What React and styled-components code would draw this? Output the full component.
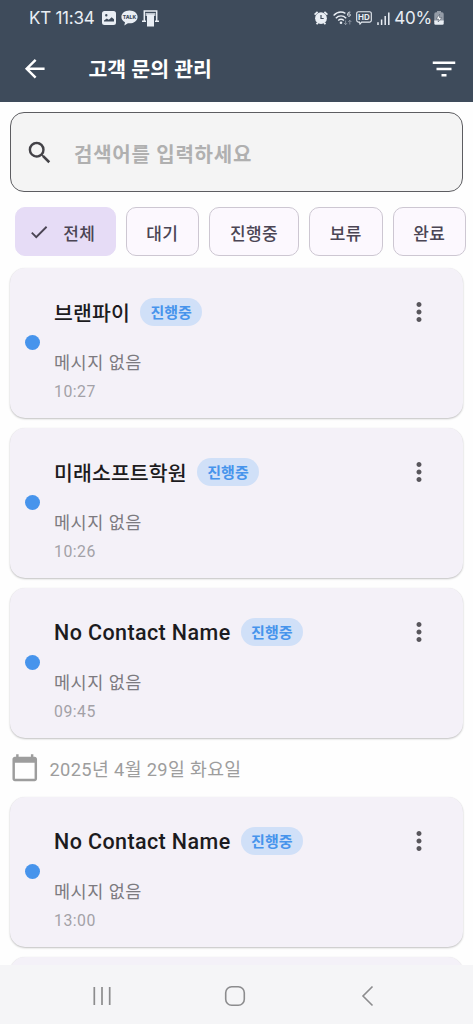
import React from "react";
import styled, { createGlobalStyle } from "styled-components";
import {
  MdArrowBack,
  MdFilterList,
  MdSearch,
  MdCheck,
  MdMoreVert,
  MdCalendarToday,
} from "react-icons/md";

const GlobalStyle = createGlobalStyle`
  * { box-sizing: border-box; }
  html, body { margin: 0; padding: 0; background: #fefefe; }
  body { font-family: Roboto, "Noto Sans CJK KR", sans-serif; overflow: hidden; }
  svg { display: block; flex: none; }
`;

const Screen = styled.div`
  width: 473px;
  height: 1024px;
  display: flex;
  flex-direction: column;
  overflow: hidden;
  background: #fefefe;
`;

const Header = styled.header`
  flex: none;
  height: 102px;
  background: #3e4b5b;
  color: #fff;
`;

const StatusBar = styled.div`
  height: 36px;
  padding: 0 29px 0 29px;
  display: flex;
  align-items: center;
  justify-content: space-between;
  color: #e9eef4;
`;

const StatusGroup = styled.div`
  display: flex;
  align-items: center;
  gap: ${(p) => p.$gap}px;
`;

const StatusText = styled.span`
  font-family: Inter, sans-serif;
  font-size: 17px;
  line-height: 20px;
  letter-spacing: ${(p) => p.$spacing}px;
  white-space: nowrap;
`;

const TitleBar = styled.div`
  height: 66px;
  padding: 0 14.5px 0 20px;
  display: flex;
  align-items: center;
`;

const Title = styled.h1`
  margin: 0 0 0 39px;
  padding-top: 2px;
  flex: 1;
  font-size: 20.5px;
  line-height: 28px;
  font-weight: 700;
`;

const SearchBox = styled.div`
  flex: none;
  margin: 10px 10px 0;
  height: 80px;
  padding: 1px 14px 0 13.5px;
  display: flex;
  align-items: center;
  border: 1px solid #5d5d61;
  border-radius: 14px;
  background: #f4f4f4;
  color: #434247;
`;

const Placeholder = styled.span`
  margin-left: 20px;
  padding-top: 5px;
  font-size: 20px;
  line-height: 28px;
  font-weight: 700;
  letter-spacing: 0.75px;
  color: #b0b0b0;
`;

const Chips = styled.div`
  flex: none;
  display: flex;
  gap: 10px;
  padding: 15px 7px 0 15px;
`;

const Chip = styled.div`
  width: ${(p) => p.$width}px;
  height: 49px;
  padding-right: ${(p) => (p.$selected ? 7 : 0)}px;
  display: flex;
  align-items: center;
  justify-content: center;
  gap: 13px;
  flex: none;
  border: 1px solid ${(p) => (p.$selected ? "#e6dcf6" : "#cdc7d2")};
  border-radius: 10px;
  background: ${(p) => (p.$selected ? "#e6dcf6" : "#fcf8fe")};
  color: #4b4554;
`;

const ChipLabel = styled.span`
  padding-top: 4px;
  font-size: 17px;
  line-height: 24px;
  font-weight: 500;
  letter-spacing: 0.3px;
`;

const List = styled.main`
  flex: 1;
  min-height: 0;
  overflow: hidden;
  padding: 12px 10px 0;
`;

const Card = styled.article`
  height: 150px;
  margin-bottom: 10px;
  padding: 0 29px 0 14.5px;
  display: flex;
  border-radius: 15px;
  background: #f4f1f8;
  box-shadow: 0 1px 2px rgba(0, 0, 0, 0.24), 0 0 1px rgba(0, 0, 0, 0.06);
`;

const Dot = styled.span`
  flex: none;
  width: 15px;
  height: 15px;
  margin-top: 67px;
  border-radius: 50%;
  background: #4794ec;
`;

const Body = styled.div`
  flex: 1;
  margin-left: 14.5px;
  padding-top: 30px;
`;

const NameRow = styled.div`
  display: flex;
  align-items: center;
  height: 28px;
  gap: 10px;
`;

const Name = styled.span`
  padding-top: ${(p) => (p.$latin ? 2 : 4)}px;
  font-size: ${(p) => (p.$latin ? 21.5 : 20.5)}px;
  line-height: 28px;
  font-weight: 500;
  letter-spacing: ${(p) => (p.$latin ? 0.4 : 0.1)}px;
  color: #1c1b20;
  white-space: nowrap;
`;

const Badge = styled.span`
  width: 62.5px;
  height: 28px;
  padding-top: 1px;
  border-radius: 14px;
  background: #d0e0f8;
  color: #4794ec;
  font-size: 15px;
  line-height: 28px;
  font-weight: 700;
  text-align: center;
`;

const Message = styled.div`
  margin-top: 25px;
  font-size: 17.5px;
  line-height: 24px;
  letter-spacing: 0.5px;
  color: #7c7a80;
`;

const Time = styled.div`
  margin-top: 7px;
  font-size: 15.8px;
  line-height: 20px;
  letter-spacing: 0.5px;
  color: #a3a1a7;
`;

const MoreButton = styled.span`
  margin-top: 29px;
  color: #58565c;
`;

const DateRow = styled.div`
  height: 49px;
  display: flex;
  align-items: center;
  gap: 10px;
  padding-bottom: 10px;
  color: #9d9d9d;
`;

const DateText = styled.span`
  padding-top: 4px;
  font-size: 18.3px;
  line-height: 26px;
  letter-spacing: 0.35px;
`;

const NavBar = styled.nav`
  flex: none;
  height: 59px;
  padding: 3px 4px 0 0;
  display: flex;
  justify-content: center;
  align-items: center;
  gap: 110.5px;
  background: #f5f5f7;
  color: #8c8c8e;
`;

const PictureIcon = () => (
  <svg width="14" height="14" viewBox="0 0 14 14">
    <path
      fill="currentColor"
      fillRule="evenodd"
      d="M2.5 0h9A2.5 2.5 0 0 1 14 2.5v9a2.5 2.5 0 0 1-2.500 2.500h-9A2.500 2.500 0 0 1 0 11.500v-9A2.500 2.500 0 0 1 2.500 0zM2 10.500h10V8.200L9.700 6.300 6.800 8.800 4.800 7.600 2 9.600zM4.300 3a1.200 1.200 0 1 0 0 2.400 1.200 1.200 0 0 0 0-2.400z"
    />
  </svg>
);

const TalkIcon = () => (
  <svg width="17" height="16" viewBox="0 0 17 16">
    <path
      fill="currentColor"
      d="M8.500 0.500C3.900 0.500.4 3.300.4 6.900c0 2.300 1.400 4.200 3.600 5.300L3.300 15.500l3.600-2.300c.5.100 1 .1 1.600.1 4.600 0 8.100-2.800 8.100-6.400S13.100.5 8.500.5z"
    />
    <text
      x="8.500"
      y="8.900"
      textAnchor="middle"
      fill="#3e4b5b"
      fontFamily="Inter, sans-serif"
      fontSize="5"
      fontWeight="800"
    >
      TALK
    </text>
  </svg>
);

const GateIcon = () => (
  <svg width="17" height="17" viewBox="0 0 17 17">
    <path d="M2.300 11V1h12.400v10M0 11.300h4M13 11.300h4" fill="none" stroke="currentColor" strokeWidth="1.500" />
    <path d="M3.600 3h9.800v3H3.600z" fill="currentColor" opacity="0.75" />
    <path d="M5 4.500h7V16.500H5z" fill="currentColor" />
  </svg>
);

const AlarmIcon = () => (
  <svg width="14" height="14" viewBox="0 0 14 14">
    <path d="M.6 3.600 3.600.9M13.400 3.600 10.400.9M2.600 13.300l1.200-1.600M11.400 13.300l-1.200-1.600" stroke="currentColor" strokeWidth="1.800" />
    <circle cx="7" cy="7.200" r="5.900" fill="currentColor" />
    <path d="M7 4v3.500h2.700" fill="none" stroke="#3e4b5b" strokeWidth="1.200" />
  </svg>
);

const WifiIcon = () => (
  <svg width="19" height="15" viewBox="0 0 19 15">
    <g fill="none" stroke="currentColor" strokeWidth="1.400">
      <path d="M.6 4.600C4.300.8 9 .5 12.400 2.400" />
      <path d="M2.800 7.200c3.100-3 7.300-3 10.400 0" />
      <path d="M5.200 9.600c1.700-1.500 4-1.500 5.700 0" />
    </g>
    <circle cx="8" cy="11.800" r="1.300" fill="currentColor" />
    <path d="M17.300 1.200c-2-.5-2.700.7-2.700 2.300 0 1.200.5 1.800 1.400 1.800s1.400-.6 1.400-1.300-.5-1.200-1.300-1.200-1.500.5-1.500 1.200" fill="none" stroke="currentColor" strokeWidth="0.900" />
    <path d="M12.600 9.500v4M11 12l1.600 1.700 1.600-1.700M16.800 13.500v-4M15.200 11l1.600-1.700 1.600 1.700" fill="none" stroke="currentColor" strokeWidth="0.900" opacity="0.45" />
  </svg>
);

const HdIcon = () => (
  <svg width="16" height="14" viewBox="0 0 16 14">
    <path d="M2.500.7h11A1.800 1.800 0 0 1 15.300 2.500v6.800a1.800 1.800 0 0 1-1.800 1.800H5.600L4 13.100 3.500 11.100h-1A1.800 1.800 0 0 1 .7 9.300V2.500A1.800 1.800 0 0 1 2.500.7z" fill="none" stroke="currentColor" strokeWidth="1.100" />
    <text x="8" y="8.900" textAnchor="middle" fill="currentColor" fontFamily="Inter, sans-serif" fontSize="8" fontWeight="700">
      HD
    </text>
  </svg>
);

const SignalIcon = () => (
  <svg width="13" height="13" viewBox="0 0 13 13">
    <path d="M1 10.300V13M4.600 7.500V13M8.200 4V13M11.800.5V13" stroke="currentColor" strokeWidth="1.500" />
  </svg>
);

const BatteryIcon = () => (
  <svg width="10" height="14" viewBox="0 0 10 14">
    <path d="M3 0h4v1.300h1A1.700 1.700 0 0 1 9.700 3v8H.3V3A1.700 1.700 0 0 1 2 1.300h1z" fill="currentColor" opacity="0.5" />
    <path d="M.3 9.500h9.400v3A1.300 1.300 0 0 1 8.400 13.800H1.600A1.300 1.300 0 0 1 .3 12.500z" fill="currentColor" />
    <path d="M5.600 3.300 2.200 7.900h2.300L4.200 11l3.500-4.500H5.400z" fill="#fff" stroke="#3e4b5b" strokeWidth="0.500" />
  </svg>
);

const RecentsIcon = () => (
  <svg width="22" height="22" viewBox="0 0 22 22">
    <path d="M3.300 2v18M11 2v18M18.700 2v18" stroke="currentColor" strokeWidth="1.700" />
  </svg>
);

const HomeIcon = () => (
  <svg width="22" height="22" viewBox="0 0 22 22">
    <rect x="1.700" y="1.700" width="18.600" height="18.600" rx="6" fill="none" stroke="currentColor" strokeWidth="1.600" />
  </svg>
);

const BackIcon = () => (
  <svg width="22" height="22" viewBox="0 0 22 22">
    <path d="M16.500 1.500 7 11 16.500 20.500" fill="none" stroke="currentColor" strokeWidth="1.600" />
  </svg>
);

const filters = [
  { label: "전체", width: 100.5, selected: true },
  { label: "대기", width: 73.5 },
  { label: "진행중", width: 90 },
  { label: "보류", width: 73.5 },
  { label: "완료", width: 73.5 },
];

const today = [
  { name: "브랜파이", time: "10:27" },
  { name: "미래소프트학원", time: "10:26" },
  { name: "No Contact Name", time: "09:45", latin: true },
];

const earlier = [{ name: "No Contact Name", time: "13:00", latin: true }];

const Inquiry = ({ name, time, latin }) => (
  <Card>
    <Dot />
    <Body>
      <NameRow>
        <Name $latin={latin}>{name}</Name>
        <Badge>진행중</Badge>
      </NameRow>
      <Message>메시지 없음</Message>
      <Time>{time}</Time>
    </Body>
    <MoreButton>
      <MdMoreVert size={30} />
    </MoreButton>
  </Card>
);

export default function App() {
  return (
    <Screen>
      <GlobalStyle />
      <Header>
        <StatusBar>
          <StatusGroup $gap={8}>
            <StatusText $spacing={-0.25}>KT 11:34</StatusText>
            <StatusGroup $gap={4.5}>
              <PictureIcon />
              <TalkIcon />
              <GateIcon />
            </StatusGroup>
          </StatusGroup>
          <StatusGroup $gap={2}>
            <StatusGroup $gap={4.5}>
              <AlarmIcon />
              <WifiIcon />
              <HdIcon />
              <SignalIcon />
              <StatusText $spacing={-0.2}>40%</StatusText>
            </StatusGroup>
            <BatteryIcon />
          </StatusGroup>
        </StatusBar>
        <TitleBar>
          <MdArrowBack size={29.5} />
          <Title>고객 문의 관리</Title>
          <MdFilterList size={30} />
        </TitleBar>
      </Header>
      <SearchBox>
        <MdSearch size={29.5} />
        <Placeholder>검색어를 입력하세요</Placeholder>
      </SearchBox>
      <Chips>
        {filters.map((f) => (
          <Chip key={f.label} $width={f.width} $selected={f.selected}>
            {f.selected && <MdCheck size={22} />}
            <ChipLabel>{f.label}</ChipLabel>
          </Chip>
        ))}
      </Chips>
      <List>
        {today.map((item) => (
          <Inquiry key={item.time} {...item} />
        ))}
        <DateRow>
          <MdCalendarToday size={29.5} />
          <DateText>2025년 4월 29일 화요일</DateText>
        </DateRow>
        {earlier.map((item) => (
          <Inquiry key={item.time} {...item} />
        ))}
        <Card />
      </List>
      <NavBar>
        <RecentsIcon />
        <HomeIcon />
        <BackIcon />
      </NavBar>
    </Screen>
  );
}
